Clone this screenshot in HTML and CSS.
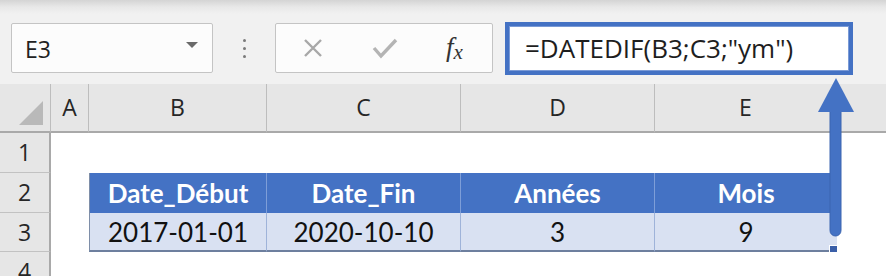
FILE: index.html
```html
<!DOCTYPE html>
<html lang="fr">
<head>
  <meta charset="UTF-8">
  <title>DATEDIF ym</title>
  <link rel="stylesheet" href="styles.css">
</head>
<body>

  <div class="toolbar">
    <div class="namebox">
      <span class="cellref">E3</span>
      <span class="dropdown"></span>
    </div>
    <div class="dots"><i></i><i></i><i></i></div>
    <div class="fnbox">
      <svg class="fn-icon" width="22" height="22" viewBox="0 0 22 22">
        <path d="M3 3 L19 19 M19 3 L3 19" stroke="#a8a8a8" stroke-width="2.4" fill="none"/>
      </svg>
      <svg class="fn-icon" width="26" height="22" viewBox="0 0 26 22">
        <path d="M2 11 L9 19 L24 3" stroke="#b4b4b4" stroke-width="3.4" fill="none"/>
      </svg>
      <span class="fx">f<span class="fx-x">x</span></span>
    </div>
    <div class="formula">=DATEDIF(B3;C3;"ym")</div>
  </div>

  <div class="sheet">
    <div class="corner"><span class="corner-tri"></span></div>
    <div class="colhead">A</div>
    <div class="colhead">B</div>
    <div class="colhead">C</div>
    <div class="colhead">D</div>
    <div class="colhead">E</div>
    <div class="colhead last"></div>

    <div class="rowhead">1</div>
    <div class="cell"></div>
    <div class="cell"></div>
    <div class="cell"></div>
    <div class="cell"></div>
    <div class="cell"></div>
    <div class="cell"></div>

    <div class="rowhead">2</div>
    <div class="cell"></div>
    <div class="cell th first">Date_Début</div>
    <div class="cell th">Date_Fin</div>
    <div class="cell th">Années</div>
    <div class="cell th lastcol">Mois</div>
    <div class="cell"></div>

    <div class="rowhead">3</div>
    <div class="cell"></div>
    <div class="cell td first">2017-01-01</div>
    <div class="cell td">2020-10-10</div>
    <div class="cell td">3</div>
    <div class="cell td lastcol">9</div>
    <div class="cell"></div>

    <div class="rowhead">4</div>
    <div class="cell"></div>
    <div class="cell"></div>
    <div class="cell"></div>
    <div class="cell"></div>
    <div class="cell"></div>
    <div class="cell"></div>
  </div>

  <!-- fleche vers la barre de formule -->
  <svg class="arrow" width="40" height="162" viewBox="0 0 40 162">
    <rect x="12" y="28" width="11" height="130" rx="5.5" fill="#4472c4" stroke="#3b64b0" stroke-width="1"/>
    <polygon points="18,0 36,34 0,34" fill="#4472c4"/>
  </svg>
  <span class="handle"></span>

</body>
</html>
```

FILE: styles.css
```css
body {
  margin: 0;
  width: 886px;
  height: 276px;
  overflow: hidden;
  position: relative;
  background-color: #f1f1f1;
  font-family: "Open Sans", "Noto Sans", sans-serif;
}
.toolbar {
  height: 76px;
  display: flex;
  align-items: flex-start;
  background: linear-gradient(#d4d4d4 0, #e8e8e8 7px, #f1f1f1 14px);
  box-sizing: border-box;
  padding-top: 23px;
}
.namebox {
  margin-left: 11px;
  width: 202px;
  height: 50px;
  box-sizing: border-box;
  background: #fcfcfc;
  border: 1px solid #c4c4c4;
  border-radius: 2px;
  display: flex;
  align-items: center;
  justify-content: space-between;
  padding: 0 14px 0 13px;
}
.cellref {
  font-size: 23px;
  color: #222;
  margin-top: 2px;
}
.dropdown {
  width: 0;
  height: 0;
  border-left: 6px solid transparent;
  border-right: 6px solid transparent;
  border-top: 6px solid #6a6a6a;
  margin-bottom: 6px;
}
.dots {
  width: 62px;
  display: flex;
  flex-direction: column;
  align-items: center;
  gap: 5px;
  padding-top: 16px;
}
.dots i {
  width: 3px;
  height: 3px;
  background: #7a7a7a;
  border-radius: 50%;
}
.fnbox {
  width: 218px;
  height: 50px;
  box-sizing: border-box;
  background: #fcfcfc;
  border: 1px solid #c4c4c4;
  border-radius: 2px;
  display: flex;
  align-items: center;
  padding-left: 26px;
  gap: 48px;
}
.fx {
  font-family: "Liberation Serif", "DejaVu Serif", serif;
  font-style: italic;
  font-size: 27px;
  line-height: 30px;
  color: #333;
}
.fx-x {
  font-size: 21px;
  position: relative;
  top: 3px;
}
.formula {
  margin-left: 12px;
  margin-top: -1px;
  width: 348px;
  height: 53px;
  box-sizing: border-box;
  background: #ffffff;
  border: 4px solid #4472c4;
  box-shadow: inset 0 0 0 1px #7a9ad6;
  padding-left: 16px;
  font-size: 26px;
  line-height: 45px;
  color: #1e1e1e;
}
.sheet {
  margin-top: 8px;
  display: grid;
  grid-template-columns: 51px 38px 178px 194px 194px 182px 49px;
  grid-template-rows: 49px 40px 40px 39px 30px;
}
.corner,
.colhead {
  background: #e6e6e6;
  border-bottom: 2px solid #a9a9a9;
  box-sizing: border-box;
}
.corner {
  border-right: 1px solid #bdbdbd;
  display: flex;
  align-items: flex-end;
  justify-content: flex-end;
  padding: 0 7px 6px 0;
}
.corner-tri {
  width: 0;
  height: 0;
  border-left: 24px solid transparent;
  border-bottom: 24px solid #b9b9b9;
}
.colhead {
  border-right: 1px solid #bdbdbd;
  text-align: center;
  font-size: 23px;
  line-height: 47px;
  color: #262626;
}
.colhead.last {
  border-right: none;
}
.rowhead {
  background: #e6e6e6;
  border-right: 2px solid #a9a9a9;
  border-bottom: 1px solid #c2c2c2;
  box-sizing: border-box;
  text-align: center;
  font-size: 23px;
  line-height: 38px;
  color: #262626;
}
.cell {
  background: #ffffff;
}
.th,
.td {
  font-family: "Lato", "Open Sans", sans-serif;
  font-size: 26px;
  text-align: center;
  box-sizing: border-box;
}
.th {
  background: #4472c4;
  color: #ffffff;
  font-weight: bold;
  line-height: 40px;
  border-right: 1px solid #7e9ed8;
}
.td {
  background: #d9e1f2;
  color: #111;
  line-height: 38px;
  border-right: 1px solid #9fb3d9;
  border-bottom: 2px solid #6d7f9e;
}
.first {
  border-left: 1px solid #7e8ea8;
}
.lastcol {
  border-right: none;
}
.arrow {
  position: absolute;
  left: 818px;
  top: 78px;
}
.handle {
  position: absolute;
  left: 829px;
  top: 245px;
  width: 7px;
  height: 6px;
  background: #3a5fa8;
  border: 1px solid #ffffff;
}
```
